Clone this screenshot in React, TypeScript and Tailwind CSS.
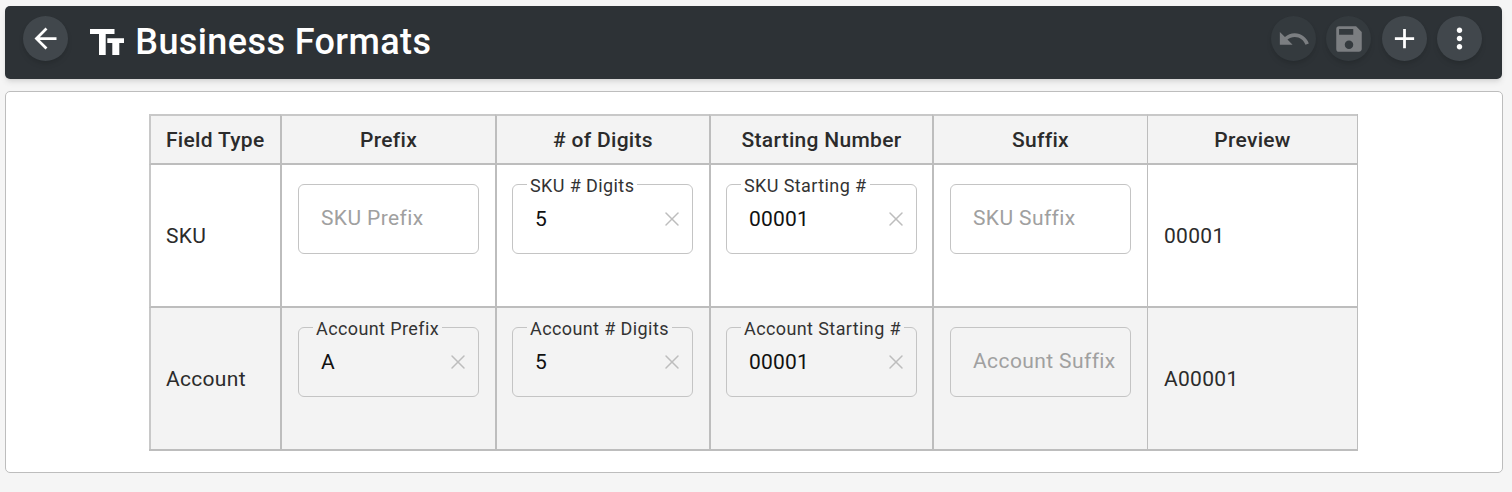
import { X } from 'lucide-react';
import { MdAdd, MdArrowBack, MdUndo, MdSave, MdMoreVert } from 'react-icons/md';

const columns = ['Field Type', 'Prefix', '# of Digits', 'Starting Number', 'Suffix', 'Preview'];
const fieldPadding = ['px-[16px]', 'pl-[15px] pr-[16px]', 'px-[15px]', 'px-[16px]'];

interface FieldProps {
  label: string;
  value?: string;
  shaded?: boolean;
}

const Field = ({ label, value, shaded }: FieldProps) => (
  <div className="relative flex h-[70px] items-center rounded-md border border-[#c4c4c4] px-[22px]">
    {value ? (
      <>
        <span
          className={`absolute left-[14px] top-[-9px] px-[3px] text-[18px] leading-[20px] tracking-[0.4px] whitespace-nowrap text-[#333] ${
            shaded ? 'bg-[#f3f3f3]' : 'bg-white'
          }`}
        >
          {label}
        </span>
        <span className="pt-[2px] text-[21px] tracking-[0.2px] text-[#111]">{value}</span>
        <X className="absolute right-[8px] top-[22px] h-[24px] w-[24px] text-[#bdbdbd]" strokeWidth={1.5} />
      </>
    ) : (
      <span className="text-[21px] tracking-[0.4px] whitespace-nowrap text-[#a0a0a0]">{label}</span>
    )}
  </div>
);

const rows = [
  {
    name: 'SKU',
    height: 'h-[143px]',
    fields: [
      { label: 'SKU Prefix' },
      { label: 'SKU # Digits', value: '5' },
      { label: 'SKU Starting #', value: '00001' },
      { label: 'SKU Suffix' },
    ],
    preview: '00001',
  },
  {
    name: 'Account',
    height: 'h-[141px]',
    fields: [
      { label: 'Account Prefix', value: 'A' },
      { label: 'Account # Digits', value: '5' },
      { label: 'Account Starting #', value: '00001' },
      { label: 'Account Suffix' },
    ],
    preview: 'A00001',
  },
];

const RoundButton = ({ children, disabled }: { children: React.ReactNode; disabled?: boolean }) => (
  <button
    className={`flex h-[45px] w-[45px] items-center justify-center rounded-full shadow-md ${
      disabled ? 'bg-[#343a3e] text-[#7b7e81]' : 'bg-[#41474c] text-white'
    }`}
  >
    {children}
  </button>
);

const App = () => {
  const grid = 'grid grid-cols-[131px_215px_214px_223px_215px_210px]';

  return (
    <div className="h-[492px] bg-[#f5f5f5] pl-[5px] pr-[9px] pt-[6px] font-['Roboto',sans-serif]">
      {/* Header */}
      <header className="mr-[1px] flex h-[73px] items-start justify-between rounded-[5px] bg-[#2d3236] pl-[18px] pr-[20px] pt-[10px] shadow-md">
        <div className="flex items-start">
          <RoundButton>
            <MdArrowBack size={33} />
          </RoundButton>
          <svg viewBox="0 0 34.3 26" className="ml-[22px] mr-[11px] mt-[13px] h-[26px] w-[34.3px] fill-white">
            <path d="M0 0h24.5v5h-8.8v21H9V5H0z" />
            <path d="M17.3 9.3h17V14h-5v12h-7V14h-5z" />
          </svg>
          <h1 className="mt-[4px] text-[36px] leading-[45px] font-medium tracking-[0.4px] text-white">Business Formats</h1>
        </div>
        <div className="flex gap-[10.3px]">
          <RoundButton disabled>
            <MdUndo size={34} />
          </RoundButton>
          <RoundButton disabled>
            <MdSave size={34} />
          </RoundButton>
          <RoundButton>
            <MdAdd size={33} />
          </RoundButton>
          <RoundButton>
            <MdMoreVert size={33} />
          </RoundButton>
        </div>
      </header>

      {/* Formats table */}
      <main className="mt-[12px] h-[382px] rounded-[5px] border border-[#bdbdbd] bg-white pl-[143px] pt-[22px]">
        <div className="h-[337px] w-[1209px] border-r border-b-2 border-[#bdbdbd] text-[21px] tracking-[0.3px] text-[#2b2b2b]">
          <div className={`${grid} h-[51px] bg-[#f3f3f3] font-medium`}>
            {columns.map((col, i) => (
              <div
                key={col}
                className={`flex items-center border-t-2 border-b-2 border-b-[#bdbdbd] border-t-[#c8c8c8] pt-[2px] ${
                  i === 0 ? 'border-l-2 border-l-[#c8c8c8] pl-[15px]' : 'justify-center border-l-[#bdbdbd]'
                } ${i > 0 && i < 5 ? 'border-l-2' : ''} ${i === 5 ? 'border-l' : ''}`}
              >
                {col}
              </div>
            ))}
          </div>
          {rows.map((row, r) => (
            <div key={row.name} className={`${grid} ${row.height} ${r === 1 ? 'bg-[#f3f3f3]' : 'bg-white'}`}>
              <div className={`flex items-center border-l-2 border-[#bdbdbd] border-l-[#c8c8c8] pl-[15px] pt-[2px] ${r === 0 ? 'border-b-2' : ''}`}>
                {row.name}
              </div>
              {row.fields.map((f, i) => (
                <div key={f.label} className={`border-l-2 border-[#bdbdbd] pt-[19px] ${fieldPadding[i]} ${r === 0 ? 'border-b-2' : ''}`}>
                  <Field {...f} shaded={r === 1} />
                </div>
              ))}
              <div className={`flex items-center border-l border-[#bdbdbd] pl-[16px] pt-[2px] ${r === 0 ? 'border-b-2' : ''}`}>
                {row.preview}
              </div>
            </div>
          ))}
        </div>
      </main>
    </div>
  );
};

export default App;
